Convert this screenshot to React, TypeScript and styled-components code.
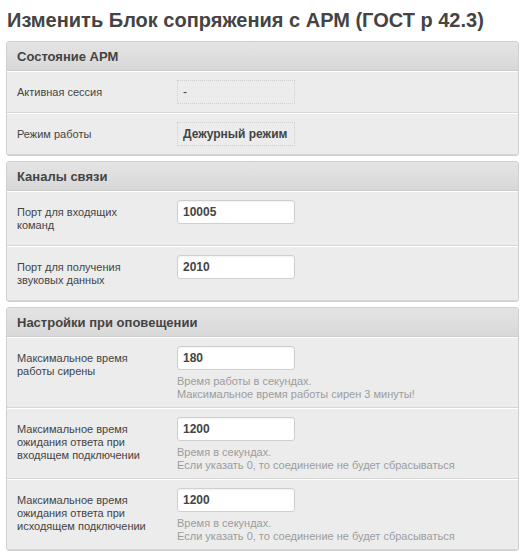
import React from 'react';
import styled, { createGlobalStyle } from 'styled-components';

const GlobalStyle = createGlobalStyle`
    body {
        margin: 0;
        background: #fff;
        font-family: "Liberation Sans", Arial, sans-serif;
        color: #444;
    }
`;

const Page = styled.div`
    padding: 0 1px 0 6px;
`;

const Title = styled.h1`
    margin: 0 0 1px 0;
    padding: 7px 1px 0 1px;
    height: 33px;
    font-size: 20px;
    font-weight: bold;
    line-height: 26px;
    color: #444;
`;

const Fieldset = styled.div`
    border: 1px solid #d0d0d0;
    border-radius: 3px;
    background: #ececec;
    margin-bottom: 5px;
    overflow: hidden;
`;

const Legend = styled.div`
    height: 28px;
    line-height: 29px;
    padding: 0 10px;
    background: linear-gradient(#e4e4e4, #d8d8d8);
    border-bottom: 1px solid #cdcdcd;
    font-size: 13px;
    font-weight: bold;
    color: #444;
`;

const Row = styled.div`
    display: flex;
    padding: 8px 10px 6px 10px;
    border-top: 1px solid #fff;
    border-bottom: 1px solid #d6d6d6;
`;

const Label = styled.div`
    width: 160px;
    flex: none;
    padding: 6px 10px 7px 0;
    box-sizing: border-box;
    font-size: 11px;
    line-height: 13px;
    color: #444;
`;

const Field = styled.div`
    display: flex;
    flex-direction: column;
`;

const ReadOnly = styled.div<{ $bold?: boolean }>`
    width: 118px;
    height: 24px;
    box-sizing: border-box;
    border: 1px dotted #d0d0d0;
    padding: 0 5px;
    font-size: 12px;
    line-height: 22px;
    font-weight: ${(p) => (p.$bold ? 'bold' : 'normal')};
    color: #444;
    white-space: nowrap;
`;

const Input = styled.input`
    width: 118px;
    height: 24px;
    box-sizing: border-box;
    border: 1px solid #cfcfcf;
    border-radius: 3px;
    background: #fff;
    box-shadow: inset 0 1px 2px rgba(0, 0, 0, 0.06);
    padding: 0 5px;
    font-family: "Liberation Sans", Arial, sans-serif;
    font-size: 12px;
    font-weight: bold;
    color: #444;
    outline: none;
`;

const Help = styled.div`
    margin-top: 5px;
    font-size: 11px;
    line-height: 13px;
    color: #9c9c9c;
`;

type FieldDef = {
    label: string[];
    value: string;
    help?: string[];
};

const channels: FieldDef[] = [
    { label: ['Порт для входящих', 'команд'], value: '10005' },
    { label: ['Порт для получения', 'звуковых данных'], value: '2010' },
];

const alerts: FieldDef[] = [
    {
        label: ['Максимальное время', 'работы сирены'],
        value: '180',
        help: ['Время работы в секундах.', 'Максимальное время работы сирен 3 минуты!'],
    },
    {
        label: ['Максимальное время', 'ожидания ответа при', 'входящем подключении'],
        value: '1200',
        help: ['Время в секундах.', 'Если указать 0, то соединение не будет сбрасываться'],
    },
    {
        label: ['Максимальное время', 'ожидания ответа при', 'исходящем подключении'],
        value: '1200',
        help: ['Время в секундах.', 'Если указать 0, то соединение не будет сбрасываться'],
    },
];

function InputRow({ def }: { def: FieldDef }) {
    return (
        <Row>
            <Label>
                {def.label.map((line, i) => (
                    <div key={i}>{line}</div>
                ))}
            </Label>
            <Field>
                <Input type="text" defaultValue={def.value} />
                {def.help && (
                    <Help>
                        {def.help.map((line, i) => (
                            <div key={i}>{line}</div>
                        ))}
                    </Help>
                )}
            </Field>
        </Row>
    );
}

function App() {
    return (
        <Page>
            <GlobalStyle />
            <Title>Изменить Блок сопряжения с АРМ (ГОСТ р 42.3)</Title>

            <Fieldset>
                <Legend>Состояние АРМ</Legend>
                <Row>
                    <Label>Активная сессия</Label>
                    <Field>
                        <ReadOnly>-</ReadOnly>
                    </Field>
                </Row>
                <Row>
                    <Label>Режим работы</Label>
                    <Field>
                        <ReadOnly $bold>Дежурный режим</ReadOnly>
                    </Field>
                </Row>
            </Fieldset>

            <Fieldset>
                <Legend>Каналы связи</Legend>
                {channels.map((def, i) => (
                    <InputRow key={i} def={def} />
                ))}
            </Fieldset>

            <Fieldset>
                <Legend>Настройки при оповещении</Legend>
                {alerts.map((def, i) => (
                    <InputRow key={i} def={def} />
                ))}
            </Fieldset>
        </Page>
    );
}

export default App;
